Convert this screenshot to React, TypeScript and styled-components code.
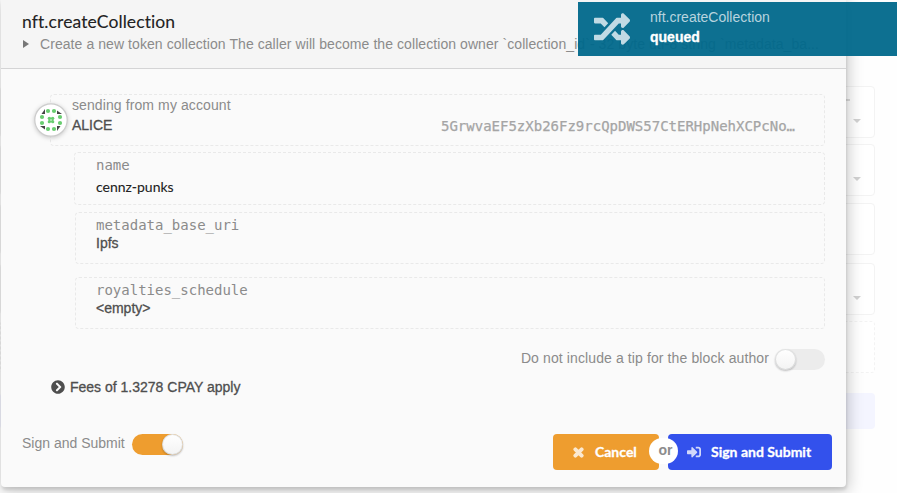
import React from 'react';
import styled, { createGlobalStyle } from 'styled-components';
import { FaRandom, FaTimes, FaSignInAlt, FaChevronCircleRight } from 'react-icons/fa';

const sans = '"Liberation Sans", Arial, sans-serif';
const lato = 'Lato, sans-serif';
const mono = '"DejaVu Sans Mono", monospace';

const GlobalStyle = createGlobalStyle`
  * { box-sizing: border-box; }
  body { margin: 0; background: #fefefe; font-family: ${sans}; overflow: hidden; }
  button { border: 0; padding: 0; margin: 0; }
`;

const Page = styled.div`
  position: relative;
  width: 897px;
  height: 493px;
  overflow: hidden;
`;

const Backdrop = styled.div`
  display: flex;
  flex-direction: column;
  width: 875px;
  padding-top: 86px;
`;

const BackField = styled.div<{ $gap: number; $dashed?: boolean }>`
  display: flex;
  align-items: flex-end;
  flex-direction: column;
  height: 52px;
  margin-bottom: ${p => p.$gap}px;
  padding: 12px 13px 14px;
  border: 1px ${p => (p.$dashed ? 'dashed' : 'solid')} #f3f3f3;
  border-radius: 4px;
  background: #fff;
`;

const BackLabel = styled.div`
  width: 6px;
  height: 2px;
  margin-right: 11px;
  background: #ddd;
`;

const Caret = styled.div`
  margin-top: auto;
  border: 4px solid transparent;
  border-top-color: #d2d2d2;
  border-bottom: 0;
`;

const BackButton = styled.div`
  height: 36px;
  margin-top: 20px;
  border-radius: 4px;
  background: #f4f5ff;
`;

const Modal = styled.div`
  position: absolute;
  left: 1px;
  top: 0;
  display: flex;
  flex-direction: column;
  width: 845px;
  height: 487px;
  border-radius: 0 0 4px 4px;
  background: #fafafa;
  box-shadow: 1px 3px 3px 0 rgba(0, 0, 0, 0.1), 1px 3px 15px 2px rgba(0, 0, 0, 0.2);
`;

const Header = styled.header`
  height: 69px;
  padding: 11px 0 0 21px;
  border-bottom: 1px solid #d4d4d5;
  background: #f5f5f5;
`;

const Title = styled.h1`
  margin: 0;
  font: 400 17.5px/22px ${lato};
  letter-spacing: 0.1px;
  color: #222;
  -webkit-text-stroke: 0.1px #222;
`;

const Summary = styled.div`
  display: flex;
  align-items: center;
  height: 22px;
  font-size: 14px;
  line-height: 22px;
  letter-spacing: 0.07px;
  color: #8b8b8b;
  white-space: nowrap;
`;

const Disclosure = styled.div`
  margin: 0 11px 0 1px;
  border: 4px solid transparent;
  border-left: 6px solid #777;
  border-right: 0;
`;

const Account = styled.section`
  display: flex;
  width: 775px;
  height: 52px;
  margin: 25px 0 6px 49px;
  border: 1px dashed #e9e9e9;
  border-radius: 4px;
`;

const Avatar = styled.svg`
  flex: none;
  width: 38px;
  height: 38px;
  margin: 6px 2px 0 -19px;
  overflow: visible;
`;

const AccountText = styled.div`
  flex: 1;
  display: flex;
  flex-direction: column;
`;

const Label = styled.div<{ $spacing?: number }>`
  height: 20px;
  font-size: 14px;
  line-height: 20px;
  letter-spacing: ${p => p.$spacing ?? 0}px;
  color: #8b8b8b;
  white-space: nowrap;
`;

const AccountLine = styled.div`
  display: flex;
  justify-content: space-between;
  height: 20px;
  padding-right: 29px;
  line-height: 20px;
`;

const Name = styled.div`
  font-size: 14px;
  color: #4e4e4e;
  -webkit-text-stroke: 0.3px #4e4e4e;
`;

const Address = styled.div`
  font: 14px/22px ${mono};
  color: #a5a5a5;
  -webkit-text-stroke: 0.25px #a5a5a5;
`;

const Param = styled.section<{ $left: number; $height: number; $gap: number }>`
  display: flex;
  flex-direction: column;
  flex: none;
  width: ${p => 825 - p.$left}px;
  height: ${p => p.$height}px;
  margin: 0 0 ${p => p.$gap}px ${p => p.$left - 1}px;
  padding: 2px 0 0 ${p => 95 - p.$left}px;
  border: 1px dashed #e9e9e9;
  border-radius: 4px;
`;

const ParamName = styled.div`
  height: 20px;
  font: 14px/20px ${mono};
  color: #8b8b8b;
`;

const ParamValue = styled.div<{ $lato?: boolean }>`
  height: 18px;
  margin-top: ${p => (p.$lato ? 3 : -1)}px;
  font: 14px/18px ${p => (p.$lato ? lato : sans)};
  color: ${p => (p.$lato ? '#222' : '#4e4e4e')};
  -webkit-text-stroke: ${p => (p.$lato ? '0.1px #222' : '0.3px #4e4e4e')};
`;

const TipRow = styled.div`
  display: flex;
  justify-content: flex-end;
  height: 22px;
  margin-top: 19px;
  padding-right: 21px;
`;

const Toggle = styled.div<{ $on?: boolean }>`
  display: flex;
  justify-content: ${p => (p.$on ? 'flex-end' : 'flex-start')};
  width: ${p => (p.$on ? 51 : 50)}px;
  height: 21px;
  margin: 1px 0 0 ${p => (p.$on ? 7 : 6)}px;
  border-radius: 11px;
  background: ${p => (p.$on ? '#ee9d2f' : '#ececec')};
`;

const Knob = styled.div`
  width: 21px;
  height: 21px;
  border-radius: 50%;
  background: linear-gradient(#fff, #f3f3f3);
  box-shadow: 0 1px 2px rgba(34, 36, 38, 0.15), 0 0 0 1px rgba(34, 36, 38, 0.13) inset, 0 1px 2px rgba(34, 36, 38, 0.15);
`;

const Fees = styled.div`
  display: flex;
  align-items: center;
  gap: 5px;
  height: 20px;
  margin: 7px 0 0 50px;
  font-size: 14px;
  color: #4e4e4e;
  -webkit-text-stroke: 0.3px #4e4e4e;
`;

const Footer = styled.footer`
  display: flex;
  justify-content: space-between;
  margin-top: 36px;
  padding: 0 14px 0 21px;
`;

const SignMode = styled.div`
  display: flex;
`;

const Actions = styled.div`
  display: flex;
  margin-top: 1px;
`;

const Button = styled.button<{ $primary?: boolean }>`
  display: flex;
  align-items: center;
  width: ${p => (p.$primary ? 164 : 106)}px;
  height: 36px;
  padding-left: 19px;
  gap: 10px;
  border-radius: 4px;
  background: ${p => (p.$primary ? '#3351ec' : '#ee9d2f')};
  font: 700 14px/20px ${lato};
  color: #fff;
  white-space: nowrap;
  -webkit-text-stroke: 0.3px #fff;
  svg { opacity: 0.78; flex: none; }
`;

const CancelIcon = styled(FaTimes)`
  stroke: #fff;
  stroke-width: 56px;
  overflow: visible;
`;

const Or = styled.div`
  z-index: 1;
  width: 29px;
  height: 26px;
  margin: 4px -10px 0;
  padding-left: 4px;
  border-radius: 13px;
  background: #fff;
  font: 700 14px/24px ${sans};
  text-align: center;
  color: #8c8c8c;
`;

const Toast = styled.div`
  position: absolute;
  left: 578px;
  top: 2px;
  display: flex;
  width: 319px;
  height: 54px;
  padding: 5px 0 0 16px;
  gap: 20px;
  background: rgba(0, 104, 139, 0.95);
  color: #c1dae4;
`;

const ToastIcon = styled(FaRandom)`
  margin-top: 4px;
`;

const ToastText = styled.div`
  display: flex;
  flex-direction: column;
  font-size: 14px;
  line-height: 20px;
  color: #b8d4df;
`;

const Status = styled.strong`
  color: #fff;
  font: 700 14px/20px ${sans};
  -webkit-text-stroke: 0.3px #fff;
`;

const sides = [0, 90, 180, 270];

function Identicon() {
  return (
    <Avatar viewBox="32 101 38 38">
      <circle cx="51" cy="120" r="16.2" fill="#fff" stroke="#ccc" strokeWidth="1.2" filter="drop-shadow(0 1px 2px rgba(0,0,0,.2))" />
      {sides.map(a => (
        <g key={a} transform={`rotate(${a} 51 120)`}>
          <circle cx="48" cy="111" r="2.1" fill="#68cd70" />
          <circle cx="54" cy="111" r="2.1" fill="#68cd70" />
          <path d="M57 110.5 L62 114 L57 114Z" fill="#444" />
          <circle cx="49.2" cy="118.2" r="1.5" fill="#68cd70" />
          <circle cx="51" cy="118.4" r="1.1" fill="#68cd70" />
        </g>
      ))}
    </Avatar>
  );
}

export default function App() {
  return (
    <>
      <GlobalStyle />
      <Page>
        <Backdrop>
          <BackField $gap={6}><BackLabel /><Caret /></BackField>
          <BackField $gap={7}><Caret /></BackField>
          <BackField $gap={8} />
          <BackField $gap={6}><Caret /></BackField>
          <BackField $gap={0} $dashed />
          <BackButton />
        </Backdrop>
        <Modal>
          <Header>
            <Title>nft.createCollection</Title>
            <Summary>
              <Disclosure />
              Create a new token collection The caller will become the collection owner `collection_id`- 32 byte utf-8 string `metadata_ba...
            </Summary>
          </Header>
          <Account>
            <Identicon />
            <AccountText>
              <Label $spacing={0.1}>sending from my account</Label>
              <AccountLine>
                <Name>ALICE</Name>
                <Address>5GrwvaEF5zXb26Fz9rcQpDWS57CtERHpNehXCPcNo…</Address>
              </AccountLine>
            </AccountText>
          </Account>
          <Param $left={74} $height={53} $gap={7}>
            <ParamName>name</ParamName>
            <ParamValue $lato>cennz-punks</ParamValue>
          </Param>
          <Param $left={75} $height={52} $gap={13}>
            <ParamName>metadata_base_uri</ParamName>
            <ParamValue>Ipfs</ParamValue>
          </Param>
          <Param $left={75} $height={52} $gap={0}>
            <ParamName>royalties_schedule</ParamName>
            <ParamValue>&lt;empty&gt;</ParamValue>
          </Param>
          <TipRow>
            <Label $spacing={0.11}>Do not include a tip for the block author</Label>
            <Toggle><Knob /></Toggle>
          </TipRow>
          <Fees><FaChevronCircleRight size={14} />Fees of 1.3278 CPAY apply</Fees>
          <Footer>
            <SignMode>
              <Label>Sign and Submit</Label>
              <Toggle $on><Knob /></Toggle>
            </SignMode>
            <Actions>
              <Button><CancelIcon size={13} />Cancel</Button>
              <Or>or</Or>
              <Button $primary><FaSignInAlt size={14} />Sign and Submit</Button>
            </Actions>
          </Footer>
        </Modal>
        <Toast>
          <ToastIcon size={36} />
          <ToastText>
            <span>nft.createCollection</span>
            <Status>queued</Status>
          </ToastText>
        </Toast>
      </Page>
    </>
  );
}
